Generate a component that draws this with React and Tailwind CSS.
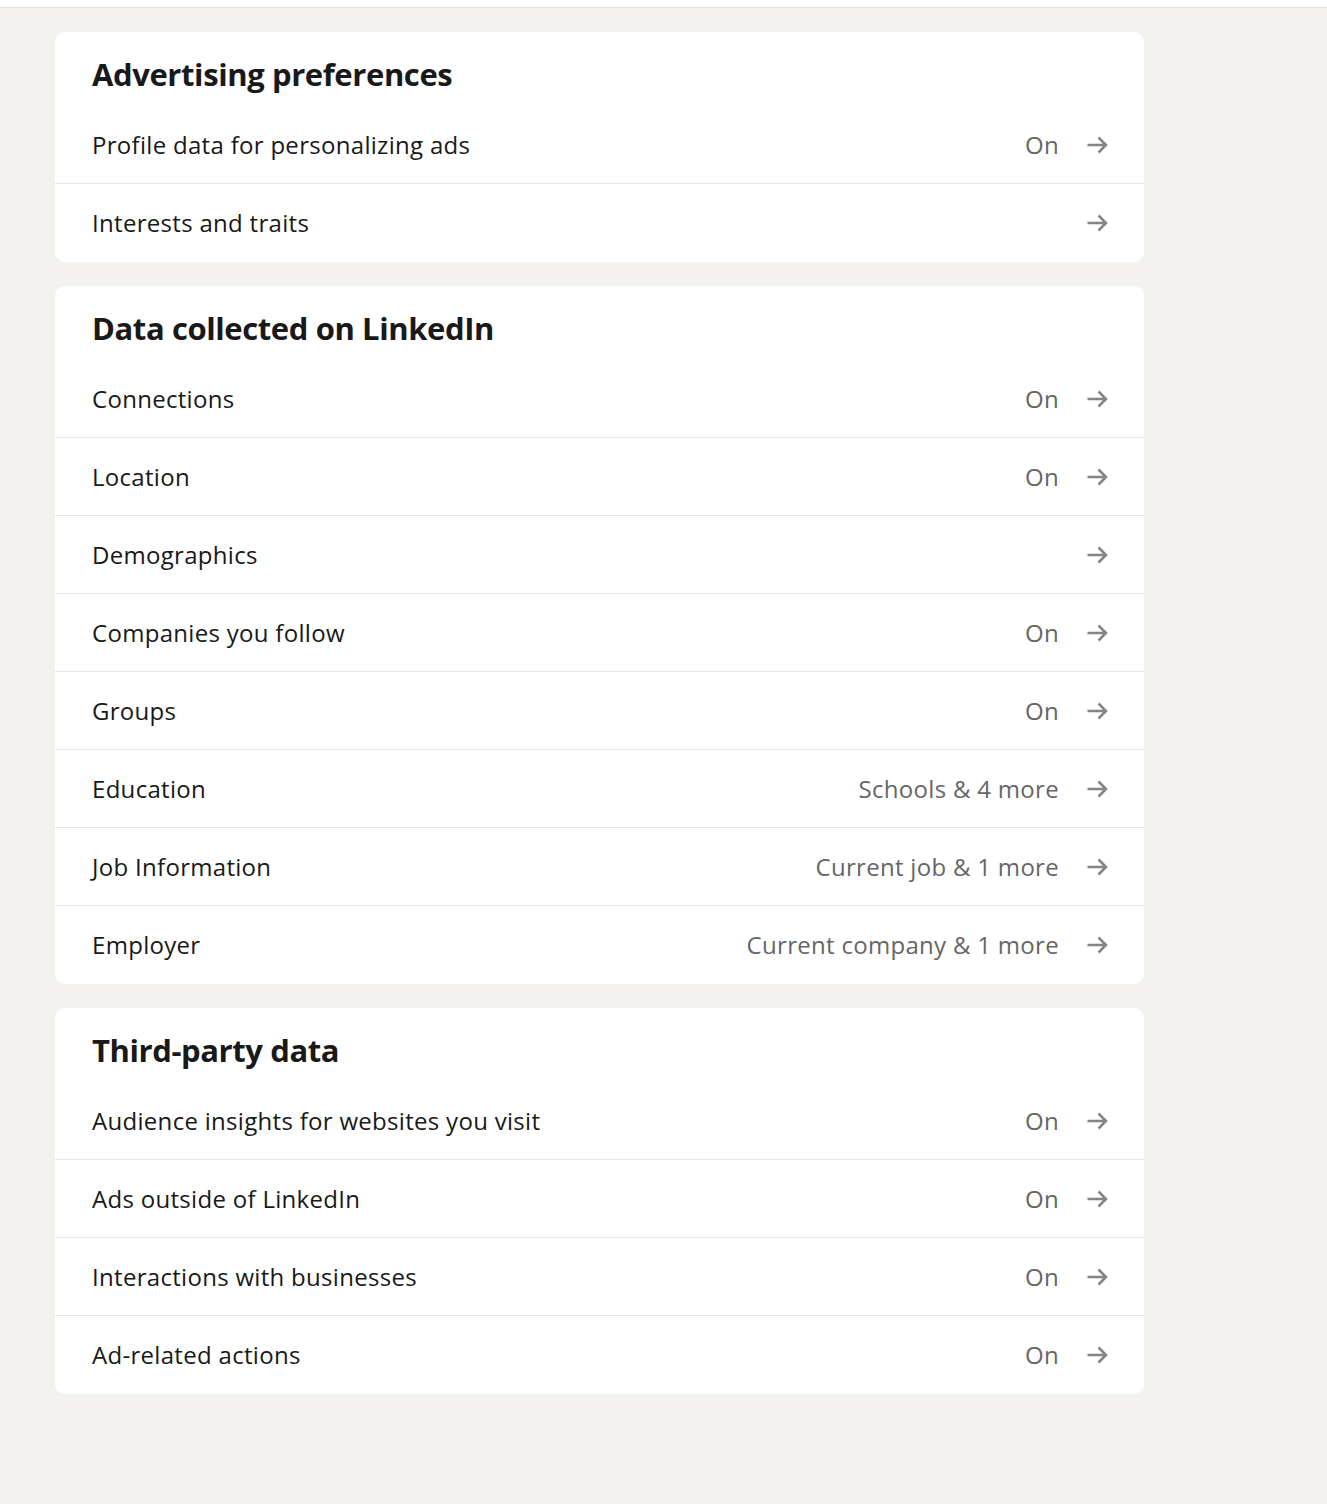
const sections = [
  {
    title: "Advertising preferences",
    rows: [
      { label: "Profile data for personalizing ads", value: "On" },
      { label: "Interests and traits", value: "" },
    ],
  },
  {
    title: "Data collected on LinkedIn",
    rows: [
      { label: "Connections", value: "On" },
      { label: "Location", value: "On" },
      { label: "Demographics", value: "" },
      { label: "Companies you follow", value: "On" },
      { label: "Groups", value: "On" },
      { label: "Education", value: "Schools & 4 more" },
      { label: "Job Information", value: "Current job & 1 more" },
      { label: "Employer", value: "Current company & 1 more" },
    ],
  },
  {
    title: "Third-party data",
    rows: [
      { label: "Audience insights for websites you visit", value: "On" },
      { label: "Ads outside of LinkedIn", value: "On" },
      { label: "Interactions with businesses", value: "On" },
      { label: "Ad-related actions", value: "On" },
    ],
  },
];

const Arrow = () => (
  <svg width="24" height="24" viewBox="0 0 24 24" fill="none" className="shrink-0">
    <path
      d="M2.5 12h18M13.5 4.5 21 12l-7.5 7.5"
      stroke="#858585"
      strokeWidth="2.6"
    />
  </svg>
);

export default function App() {
  return (
    <div
      className="min-h-[1504px] bg-[#f3f2ef] text-[#191919]"
      style={{ fontFamily: '"Open Sans", "Noto Sans", sans-serif' }}
    >
      <div className="h-[8px] bg-white border-b border-[#e4e4e4]" />
      <div className="flex flex-col gap-6 pt-6 pl-[55px] w-[1144px]">
        {sections.map((section) => (
          <section key={section.title} className="bg-white rounded-[10px] overflow-hidden">
            <h2 className="px-[37px] pt-[22px] h-[74px] text-[31px] leading-[40px] font-bold tracking-[-0.4px]">
              {section.title}
            </h2>
            {section.rows.map((row, i) => (
              <a
                key={row.label}
                className={
                  "flex items-center h-[78px] pl-[37px] pr-[35px] " +
                  (i < section.rows.length - 1 ? "border-b border-[#e8e8e8]" : "")
                }
              >
                <span className="flex-1 text-[24px] leading-8 tracking-[0.3px]">{row.label}</span>
                {row.value && (
                  <span className="text-[24px] leading-8 tracking-[0.3px] text-[#666666] mr-[26px]">
                    {row.value}
                  </span>
                )}
                <Arrow />
              </a>
            ))}
          </section>
        ))}
      </div>
    </div>
  );
}
